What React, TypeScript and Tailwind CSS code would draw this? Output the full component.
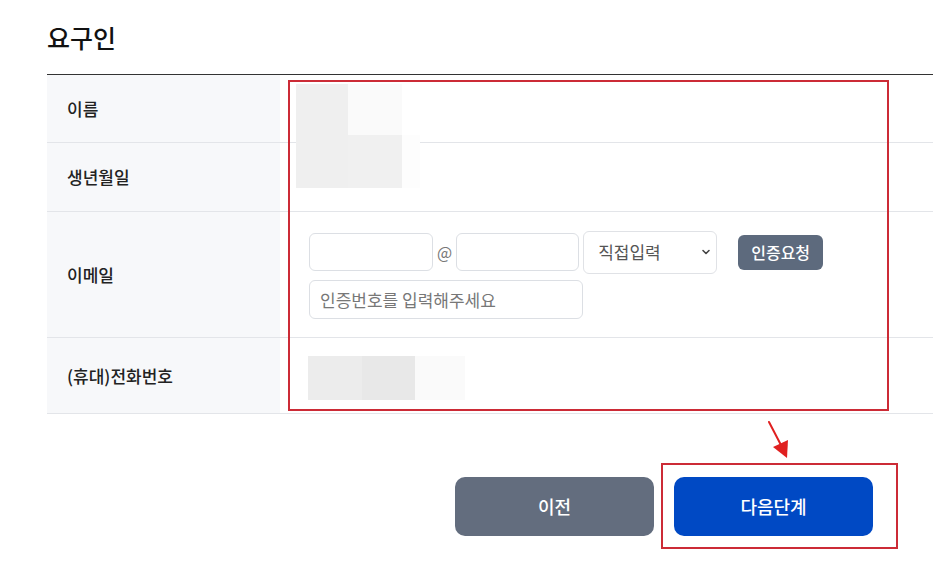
import React from "react";

const font = { fontFamily: '"Noto Sans CJK KR", "Noto Sans", sans-serif' };

function Row({ label, h, children }: { label: string; h: string; children?: React.ReactNode }) {
  return (
    <div className={`grid grid-cols-[233px_1fr] border-b border-[#e3e5e9] ${h}`}>
      <div className="flex items-center bg-[#f7f8fa] pl-5 text-[17px] font-medium text-[#222]">{label}</div>
      <div className="flex items-center pl-[29px]">{children}</div>
    </div>
  );
}

export default function App() {
  return (
    <div className="relative min-h-[574px] w-[933px] overflow-hidden bg-white" style={font}>
      <div className="pl-[47px] pt-[20px]">
        <h2 className="text-[25px] font-medium leading-[34px] text-[#111]">요구인</h2>

        {/* 정보 표 */}
        <div className="relative mt-[20px] border-t border-[#333]">
          <Row label="이름" h="h-[68px]" />
          <Row label="생년월일" h="h-[69px]" />
          <Row label="이메일" h="h-[126px]">
            <div className="flex flex-col gap-[6px]">
              <div className="flex items-center">
                <input className="h-[38px] w-[124px] rounded-md border border-[#dcdfe4] bg-white px-2 outline-none" />
                <span className="mx-[4px] text-[16px] text-[#777]">@</span>
                <input className="h-[38px] w-[123px] rounded-md border border-[#dcdfe4] bg-white px-2 outline-none" />
                <div className="ml-[4px] flex h-[43px] w-[134px] items-center justify-between rounded-md border border-[#e0e2e6] bg-white pl-[14px] pr-[4px] text-[17px] text-[#555]">
                  <span>직접입력</span>
                  <svg width="12" height="12" viewBox="0 0 12 12" fill="none" stroke="#444" strokeWidth="1.6" strokeLinecap="round" strokeLinejoin="round">
                    <path d="M3 4.5l3 3 3-3" />
                  </svg>
                </div>
                <button className="ml-[21px] h-[35px] w-[85px] rounded-md bg-[#5d6a7d] text-[16px] font-medium text-white">인증요청</button>
              </div>
              <input
                placeholder="인증번호를 입력해주세요"
                className="h-[39px] w-[274px] rounded-md border border-[#dcdfe4] bg-white px-[10px] text-[17px] outline-none placeholder:text-[#777]"
              />
            </div>
          </Row>
          <Row label="(휴대)전화번호" h="h-[76px]" />

          {/* 모자이크 처리된 값 */}
          <div className="absolute left-[249px] top-[9px] h-[104px] w-[52px] bg-[#efefef]" />
          <div className="absolute left-[301px] top-[9px] h-[51px] w-[54px] bg-[#fafafa]" />
          <div className="absolute left-[301px] top-[60px] h-[53px] w-[54px] bg-[#f0f0f0]" />
          <div className="absolute left-[355px] top-[60px] h-[53px] w-[18px] bg-[#fdfdfd]" />
          <div className="absolute left-[261px] top-[281px] h-[44px] w-[54px] bg-[#ececec]" />
          <div className="absolute left-[315px] top-[281px] h-[44px] w-[53px] bg-[#e8e8e8]" />
          <div className="absolute left-[368px] top-[281px] h-[44px] w-[50px] bg-[#fafafa]" />
        </div>

        <div className="ml-[408px] mt-[63px] flex gap-5">
          <button className="h-[59px] w-[199px] rounded-[10px] bg-[#636d7e] text-[18px] font-medium text-white">이전</button>
          <button className="h-[59px] w-[199px] rounded-[10px] bg-[#0049c4] text-[18px] font-medium text-white">다음단계</button>
        </div>
      </div>

      {/* 강조 표시 */}
      <div className="pointer-events-none absolute left-[288px] top-[80px] h-[331px] w-[601px] border-2 border-[#cc2b36]" />
      <div className="pointer-events-none absolute left-[661px] top-[463px] h-[86px] w-[237px] border-2 border-[#cc2b36]" />
      <svg className="pointer-events-none absolute left-[760px] top-[415px]" width="40" height="50" viewBox="0 0 40 50">
        <path d="M9 7L22 32" stroke="#e02020" strokeWidth="2" strokeLinecap="round" />
        <path d="M13 32L28 25L27 43Z" fill="#e02020" />
      </svg>
    </div>
  );
}
